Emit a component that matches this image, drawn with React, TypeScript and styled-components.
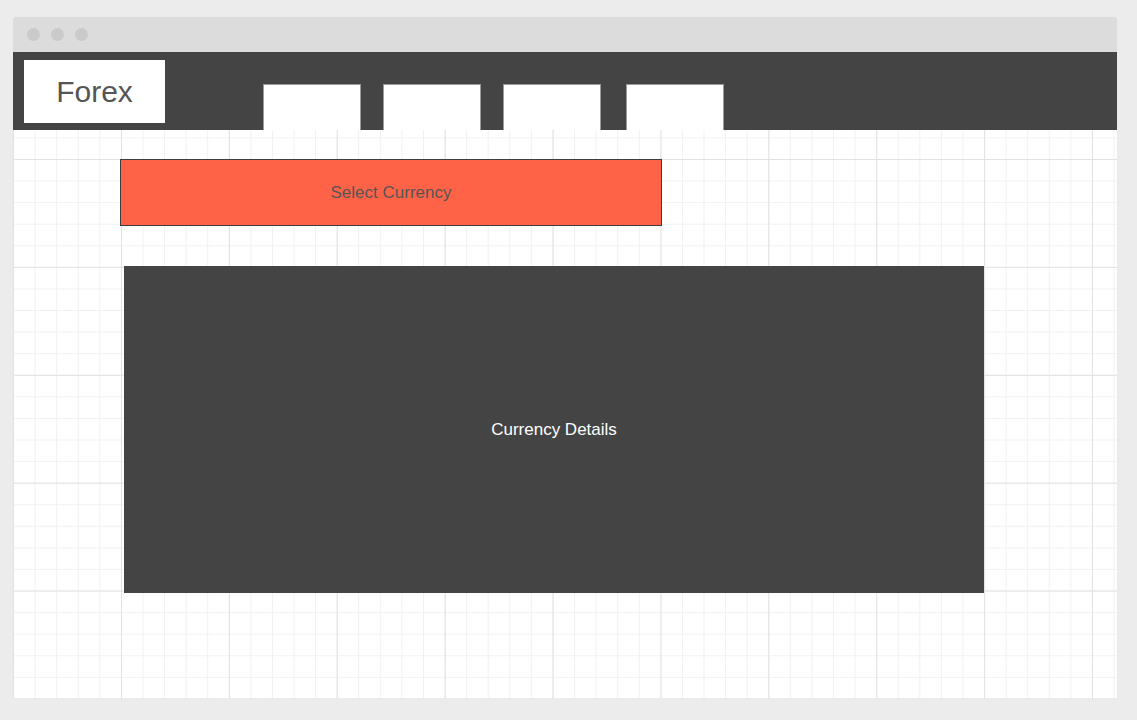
import React from "react";
import styled, { createGlobalStyle } from "styled-components";

const Global = createGlobalStyle`
  html, body { margin: 0; padding: 0; background: #ececec; }
  body { font-family: "Liberation Sans", Arial, sans-serif; }
`;

const Page = styled.div`
  width: 1137px;
  height: 720px;
  padding: 17px 0 0 13px;
  box-sizing: border-box;
`;

const Frame = styled.div`
  width: 1104px;
  display: flex;
  flex-direction: column;
  border-radius: 4px 4px 0 0;
  overflow: hidden;
  box-shadow: 0 0 1px rgba(0, 0, 0, 0.08);
`;

const TitleBar = styled.div`
  height: 35px;
  background: #dcdcdc;
  display: flex;
  align-items: center;
  gap: 11px;
  padding-left: 14px;
`;

const Dot = styled.span`
  width: 13px;
  height: 13px;
  border-radius: 50%;
  background: #cacaca;
`;

const Nav = styled.div`
  height: 78px;
  background: #444444;
  display: flex;
  align-items: flex-start;
`;

const Logo = styled.div`
  margin: 8px 0 0 11px;
  width: 141px;
  height: 63px;
  background: #ffffff;
  display: flex;
  align-items: center;
  justify-content: center;
  font-size: 30px;
  color: #555555;
`;

const NavButtons = styled.div`
  align-self: flex-end;
  margin-left: 98px;
  display: flex;
  gap: 22px;
`;

const NavButton = styled.div<{ $extra?: number }>`
  width: 98px;
  height: 46px;
  background: #ffffff;
  border: 1px solid #9a9a9a;
  border-bottom: none;
  box-sizing: border-box;
  margin-left: ${(p) => p.$extra ?? 0}px;
`;

const Canvas = styled.div`
  height: 569px;
  background-color: #ffffff;
  background-image:
    linear-gradient(to right, #e2e2e2 1px, transparent 1px),
    linear-gradient(to bottom, #e2e2e2 1px, transparent 1px),
    linear-gradient(to right, #f1f1f1 1px, transparent 1px),
    linear-gradient(to bottom, #f1f1f1 1px, transparent 1px);
  background-size: 107.9px 107.9px, 107.9px 107.9px, 21.58px 21.58px, 21.58px 21.58px;
  background-position: 108px 0, 0 29px, 0 0, 0 7.4px;
  display: flex;
  flex-direction: column;
  align-items: flex-start;
  padding: 29px 0 0 107px;
  box-sizing: border-box;
`;

const SelectBox = styled.div`
  width: 542px;
  height: 67px;
  background: #ff6347;
  border: 1px solid #3e3e3e;
  box-sizing: border-box;
  display: flex;
  align-items: center;
  justify-content: center;
  font-size: 17px;
  color: #555555;
`;

const Details = styled.div`
  margin: 40px 0 0 4px;
  width: 860px;
  height: 327px;
  background: #444444;
  display: flex;
  align-items: center;
  justify-content: center;
  font-size: 17px;
  color: #ffffff;
`;

export default function App() {
  return (
    <>
      <Global />
      <Page>
        <Frame>
          <TitleBar>
            <Dot />
            <Dot />
            <Dot />
          </TitleBar>
          <Nav>
            <Logo>Forex</Logo>
            <NavButtons>
              <NavButton />
              <NavButton />
              <NavButton />
              <NavButton $extra={3} />
            </NavButtons>
          </Nav>
          <Canvas>
            <SelectBox>Select Currency</SelectBox>
            <Details>Currency Details</Details>
          </Canvas>
        </Frame>
      </Page>
    </>
  );
}
